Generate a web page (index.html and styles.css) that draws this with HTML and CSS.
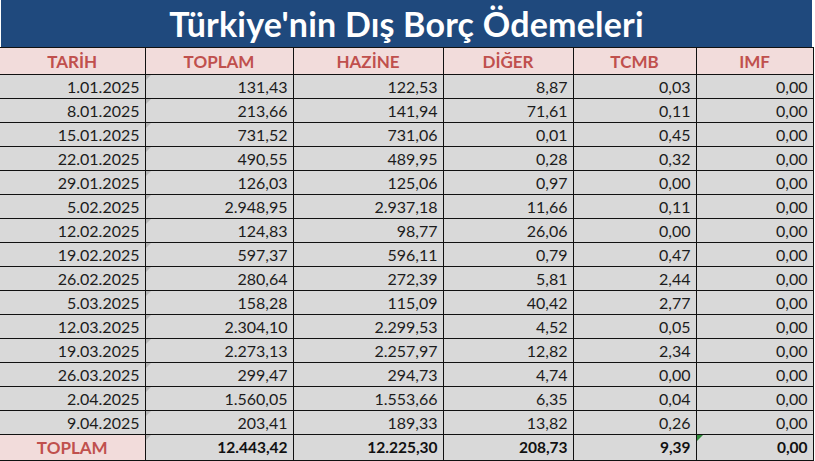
FILE: index.html
```html
<!DOCTYPE html>
<html lang="tr">
<head>
<meta charset="utf-8">
<link rel="stylesheet" href="styles.css">
</head>
<body>
<div class="sheet">
  <div class="title">Türkiye'nin Dış Borç Ödemeleri</div>
  <table class="grid">
    <colgroup>
      <col class="c1"><col class="c2"><col class="c3"><col class="c4"><col class="c5"><col class="c6">
    </colgroup>
    <thead>
      <tr><th>TARİH</th><th>TOPLAM</th><th>HAZİNE</th><th>DİĞER</th><th>TCMB</th><th>IMF</th></tr>
    </thead>
    <tbody>
      <tr><td>1.01.2025</td><td class="mark">131,43</td><td>122,53</td><td>8,87</td><td>0,03</td><td>0,00</td></tr>
      <tr><td>8.01.2025</td><td class="mark">213,66</td><td>141,94</td><td>71,61</td><td>0,11</td><td>0,00</td></tr>
      <tr><td>15.01.2025</td><td class="mark">731,52</td><td>731,06</td><td>0,01</td><td>0,45</td><td>0,00</td></tr>
      <tr><td>22.01.2025</td><td class="mark">490,55</td><td>489,95</td><td>0,28</td><td>0,32</td><td>0,00</td></tr>
      <tr><td>29.01.2025</td><td class="mark">126,03</td><td>125,06</td><td>0,97</td><td>0,00</td><td>0,00</td></tr>
      <tr><td>5.02.2025</td><td class="mark">2.948,95</td><td>2.937,18</td><td>11,66</td><td>0,11</td><td>0,00</td></tr>
      <tr><td>12.02.2025</td><td class="mark">124,83</td><td>98,77</td><td>26,06</td><td>0,00</td><td>0,00</td></tr>
      <tr><td>19.02.2025</td><td class="mark">597,37</td><td>596,11</td><td>0,79</td><td>0,47</td><td>0,00</td></tr>
      <tr><td>26.02.2025</td><td class="mark">280,64</td><td>272,39</td><td>5,81</td><td>2,44</td><td>0,00</td></tr>
      <tr><td>5.03.2025</td><td class="mark">158,28</td><td>115,09</td><td>40,42</td><td>2,77</td><td>0,00</td></tr>
      <tr><td>12.03.2025</td><td class="mark">2.304,10</td><td>2.299,53</td><td>4,52</td><td>0,05</td><td>0,00</td></tr>
      <tr><td>19.03.2025</td><td class="mark">2.273,13</td><td>2.257,97</td><td>12,82</td><td>2,34</td><td>0,00</td></tr>
      <tr><td>26.03.2025</td><td class="mark">299,47</td><td>294,73</td><td>4,74</td><td>0,00</td><td>0,00</td></tr>
      <tr><td>2.04.2025</td><td class="mark">1.560,05</td><td>1.553,66</td><td>6,35</td><td>0,04</td><td>0,00</td></tr>
      <tr><td>9.04.2025</td><td class="mark">203,41</td><td>189,33</td><td>13,82</td><td>0,26</td><td>0,00</td></tr>
    </tbody>
    <tfoot>
      <tr><th>TOPLAM</th><td class="mark">12.443,42</td><td>12.225,30</td><td>208,73</td><td>9,39</td><td class="err">0,00</td></tr>
    </tfoot>
  </table>
</div>
</body>
</html>
```
FILE: styles.css
```css
html, body {
  margin: 0;
  padding: 0;
  background: #ffffff;
}
.sheet {
  width: 813px;
  font-family: Lato, "Open Sans", sans-serif;
}
.title {
  height: 47px;
  margin-left: 1px;
  width: 811px;
  background: #1f497d;
  color: #ffffff;
  font-weight: 700;
  font-size: 34px;
  line-height: 47px;
  text-align: center;
  letter-spacing: 0.2px;
}
.grid {
  border-collapse: collapse;
  table-layout: fixed;
  width: 813px;
}
.c1 { width: 145px; }
.c2 { width: 148px; }
.c3 { width: 150px; }
.c4 { width: 130px; }
.c5 { width: 123px; }
.c6 { width: 117px; }
.grid th, .grid td {
  border: 1px solid #111111;
  padding: 0 5px 0 0;
  height: 23px;
  font-size: 16px;
  line-height: 23px;
  white-space: nowrap;
  overflow: hidden;
}
.grid tr > :first-child { border-left: none; }
.grid thead th {
  border-top: 1px solid #111111;
  height: 26px;
  background: #f2dcdb;
  color: #c0504d;
  font-weight: 700;
  font-size: 17px;
  text-align: center;
  padding: 0;
}
.grid tbody td {
  background: #d9d9d9;
  color: #1c1c1c;
  text-align: right;
}
.grid tfoot th {
  background: #f2dcdb;
  color: #c0504d;
  font-weight: 700;
  font-size: 17px;
  text-align: center;
  padding: 0;
  height: 25px;
}
.grid tfoot td {
  background: #d9d9d9;
  color: #111111;
  font-weight: 700;
  font-size: 15.5px;
  text-align: right;
  height: 25px;
}
.mark, .err {
  position: relative;
}
.mark::before {
  content: "";
  position: absolute;
  left: 0;
  top: 0;
  border-top: 5px solid #b8b8b8;
  border-right: 5px solid transparent;
}
.err::before {
  content: "";
  position: absolute;
  left: 0;
  top: 0;
  border-top: 6px solid #2e8b3a;
  border-right: 6px solid transparent;
}
```
